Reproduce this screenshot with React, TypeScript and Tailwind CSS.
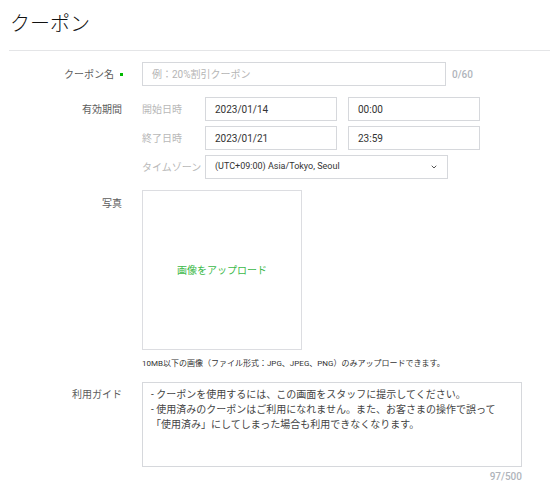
import React from 'react';
import { ChevronDown } from 'lucide-react';

const font = { fontFamily: 'Roboto, "Noto Sans CJK JP", sans-serif' };

function Field({ value, className }: { value: string; className: string }) {
  return (
    <div className={`h-[24px] border border-[#d6d8dc] flex items-center pl-[9px] text-[10px] text-[#333] ${className}`}>
      {value}
    </div>
  );
}

export default function App() {
  return (
    <div className="w-[550px] h-[498px] bg-white overflow-hidden" style={font}>
      {/* Header */}
      <div className="ml-[9px] h-[51px] border-b border-[#e4e5e7] flex items-center">
        <h1 className="pl-[1px] text-[20px] font-light leading-none text-[#111] pb-[2px]">クーポン</h1>
      </div>

      {/* Coupon name */}
      <div className="flex items-center mt-[11px]">
        <div className="w-[122px] flex items-center justify-end text-[10px] text-[#5c5c5c]">
          クーポン名
          <span className="ml-[6px] mr-[-1px] w-[3px] h-[3px] bg-[#00b900]" />
        </div>
        <div className="ml-[20px] w-[304px] h-[24px] border border-[#d6d8dc] flex items-center pl-[9px] text-[10px] text-[#b5b5b5]">
          例：20%割引クーポン
        </div>
        <span className="ml-[6px] text-[10px] font-medium text-[#b0b4bb]">0/60</span>
      </div>

      {/* Valid period */}
      <div className="flex mt-[11px]">
        <div className="w-[122px] text-right text-[10px] text-[#5c5c5c] pt-[5px]">有効期間</div>
        <div className="ml-[20px] flex flex-col gap-[5px]">
          <div className="flex items-center">
            <span className="w-[63px] text-[10px] text-[#b8b8b8]">開始日時</span>
            <Field value="2023/01/14" className="w-[132px]" />
            <Field value="00:00" className="w-[132px] ml-[11px]" />
          </div>
          <div className="flex items-center">
            <span className="w-[63px] text-[10px] text-[#b8b8b8]">終了日時</span>
            <Field value="2023/01/21" className="w-[132px]" />
            <Field value="23:59" className="w-[132px] ml-[11px]" />
          </div>
          <div className="flex items-center">
            <span className="w-[63px] text-[10px] text-[#b8b8b8]">タイムゾーン</span>
            <div className="w-[243px] h-[24px] border border-[#d6d8dc] flex items-center justify-between pl-[9px] pr-[9px] text-[9px] text-[#333]">
              (UTC+09:00) Asia/Tokyo, Seoul
              <ChevronDown className="w-[8px] h-[8px] text-[#555]" strokeWidth={3} />
            </div>
          </div>
        </div>
      </div>

      {/* Photo */}
      <div className="flex mt-[11px]">
        <div className="w-[122px] text-right text-[10px] text-[#5c5c5c] pt-[6px]">写真</div>
        <div className="ml-[20px] flex flex-col">
          <div className="w-[160px] h-[160px] border border-[#dcdde1] flex items-center justify-center text-[10px] text-[#3cb94a]">
            画像をアップロード
          </div>
          <p className="mt-[8px] text-[8px] text-[#333] leading-[12px]">
            10MB以下の画像（ファイル形式：JPG、JPEG、PNG）のみアップロードできます。
          </p>
        </div>
      </div>

      {/* Guide */}
      <div className="flex mt-[12px]">
        <div className="w-[122px] text-right text-[10px] text-[#5c5c5c] pt-[5px]">利用ガイド</div>
        <div className="ml-[20px] flex flex-col">
          <div className="w-[380px] h-[85px] border border-[#d6d8dc] px-[8px] pt-[4px] text-[10px] leading-[15px] text-[#444]">
            <p>- クーポンを使用するには、この画面をスタッフに提示してください。</p>
            <p>- 使用済みのクーポンはご利用になれません。また、お客さまの操作で誤って</p>
            <p>「使用済み」にしてしまった場合も利用できなくなります。</p>
          </div>
          <span className="self-end mt-[2px] text-[10px] font-medium text-[#b0b4bb]">97/500</span>
        </div>
      </div>
    </div>
  );
}
